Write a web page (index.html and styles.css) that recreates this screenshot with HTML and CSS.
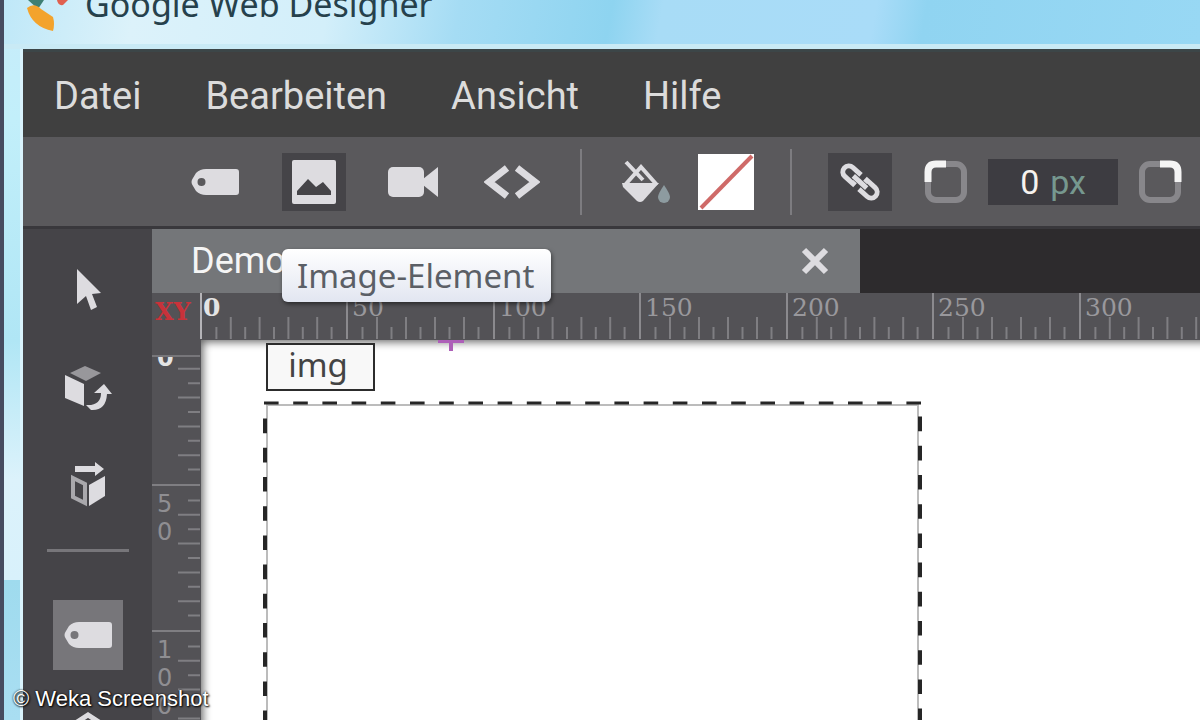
FILE: index.html
```
<!DOCTYPE html>
<html lang="de">
<head>
    <meta charset="UTF-8">
    <meta name="viewport" content="width=device-width, initial-scale=1.0">
    <title>Google Web Designer</title>
    <link rel="stylesheet" href="styles.css">
</head>
<body>
    <!-- shared shapes -->
    <svg class="defs" aria-hidden="true">
        <symbol id="tag" viewBox="0 0 48 28">
            <path fill-rule="evenodd" d="M15 1H45Q48 1 48 4V24Q48 27 45 27H15Q9 27 5 23L2 18Q-1 14 2 10L5 5Q9 1 15 1ZM10.500 10A4 4 0 1 0 10.500 18A4 4 0 1 0 10.500 10Z"/>
        </symbol>
        <symbol id="ticks-h" viewBox="0 0 100 46" preserveAspectRatio="none">
            <path vector-effect="non-scaling-stroke" d="M10 34V46M20 24V46M30 34V46M40 24V46M50 34V46M60 24V46M70 34V46M80 24V46M90 34V46"/>
        </symbol>
        <symbol id="ticks-v" viewBox="0 0 48 100" preserveAspectRatio="none">
            <path vector-effect="non-scaling-stroke" d="M36 10H48M26 20H48M36 30H48M26 40H48M36 50H48M26 60H48M36 70H48M26 80H48M36 90H48"/>
        </symbol>
    </svg>

    <div class="window">
        <header class="titlebar">
            <svg class="logo" viewBox="0 0 46 40">
                <path d="M4 0H20L14 9Z" fill="#3e7f73"/>
                <path d="M3 8Q10 2 17 9L29 17Q31 24 29 31Q8 27 3 8Z" fill="#f3a32c"/>
                <path d="M33 0H44L39 5Q34 6 33 0Z" fill="#e0604f"/>
            </svg>
            <span class="title">Google Web Designer</span>
        </header>

        <div class="app">
            <nav class="menu">
                <a href="#">Datei</a>
                <a href="#">Bearbeiten</a>
                <a href="#">Ansicht</a>
                <a href="#">Hilfe</a>
            </nav>

            <div class="toolbar">
                <div class="group elements">
                    <button aria-label="Tag-Element"><svg width="48" height="28"><use href="#tag"/></svg></button>
                    <button class="active" aria-label="Image-Element">
                        <svg width="46" height="46" viewBox="0 0 46 46">
                            <rect x="1" y="1" width="44" height="44" rx="2"/>
                            <path d="M6 36V32L17 20L25 28L32 23L40 32V36Z" fill="#454448"/>
                        </svg>
                        <span class="tooltip">Image-Element</span>
                    </button>
                    <button aria-label="Video-Element">
                        <svg width="52" height="34" viewBox="0 0 52 34">
                            <rect x="1" y="2" width="36" height="30" rx="5"/>
                            <path d="M36 14L51 2V32L36 20Z"/>
                        </svg>
                    </button>
                    <button aria-label="Code">
                        <svg width="56" height="34" viewBox="0 0 56 34">
                            <path class="line" d="M23 3L5 17L23 31M33 3L51 17L33 31" stroke-width="7"/>
                        </svg>
                    </button>
                </div>
                <span class="divider"></span>
                <div class="group fill">
                    <button aria-label="Füllen">
                        <svg width="50" height="44" viewBox="0 0 50 44">
                            <path class="line" d="M5 2L22 20M4 25L20 7L36 25" stroke-width="4"/>
                            <path d="M1 23H38L22 41Q19 43 16 41L2 27Z"/>
                            <path d="M43 25Q49 34 49 37A6 6 0 0 1 37 37Q37 34 43 25Z" fill="#8d9ba0"/>
                        </svg>
                    </button>
                    <button class="swatch" aria-label="Keine Farbe">
                        <svg width="56" height="56" viewBox="0 0 56 56">
                            <path d="M3 54L54 2" stroke="#cf6a68" stroke-width="4"/>
                        </svg>
                    </button>
                </div>
                <span class="divider"></span>
                <button class="active" aria-label="Ecken verknüpfen">
                    <svg width="42" height="40" viewBox="0 0 42 40">
                        <g class="line" stroke-width="5" transform="rotate(42 21 20)">
                            <path d="M17 14H6A6 6 0 0 0 6 26H17V23M25 17V14H36A6 6 0 0 1 36 26H25M12 20H30"/>
                        </g>
                    </svg>
                </button>
                <label class="radius">
                    <svg width="44" height="44" viewBox="0 0 44 44">
                        <rect class="corner" x="4" y="4" width="36" height="36" rx="8"/>
                        <path class="corner-on" d="M4 22V12Q4 4 12 4H22"/>
                    </svg>
                    <span class="field"><input type="text" value="0" aria-label="Radius">px</span>
                </label>
                <svg class="next-corner" width="44" height="44" viewBox="0 0 44 44">
                    <rect class="corner" x="4" y="4" width="36" height="36" rx="8"/>
                    <path class="corner-on" d="M22 4H32Q40 4 40 12V22"/>
                </svg>
            </div>

            <div class="main">
                <aside class="tools">
                    <button aria-label="Auswahl">
                        <svg width="26" height="44" viewBox="0 0 26 44">
                            <path d="M2 1L26 25L17 26L22 39L16 42L11 28L2 36Z"/>
                        </svg>
                    </button>
                    <button aria-label="3D-Objekt drehen">
                        <svg width="50" height="48" viewBox="0 0 50 48">
                            <path d="M7 9L22 2L38 9L23 17Z" fill="#98979b"/>
                            <path d="M2 11L21 20V42L2 34Z"/>
                            <path d="M23 41Q38 42 38 29H31L41 20L49 30H44Q43 47 28 46Z"/>
                        </svg>
                    </button>
                    <button aria-label="3D-Szene verschieben">
                        <svg width="38" height="48" viewBox="0 0 38 48">
                            <path d="M6 4H26V0L35 7L26 14V10H6Z"/>
                            <path d="M4 16L16 22V41L4 35Z" fill="none" stroke="#a9a8ac" stroke-width="4"/>
                            <path d="M20 23L36 14V34L20 44Z"/>
                        </svg>
                    </button>
                    <hr>
                    <button class="selected" aria-label="Tag"><svg width="48" height="28"><use href="#tag"/></svg></button>
                    <button aria-label="Stift">
                        <svg width="44" height="46" viewBox="0 0 44 46">
                            <path class="line" d="M5 16L22 5L39 16L33 40H11Z" stroke-width="5"/>
                            <circle cx="22" cy="20" r="5"/>
                        </svg>
                    </button>
                </aside>

                <section class="document">
                    <div class="tabs">
                        <div class="tab">
                            <span>Demo</span>
                            <button aria-label="Schließen">
                                <svg width="30" height="28" viewBox="0 0 30 28">
                                    <path class="line" d="M4 3L26 25M26 3L4 25" stroke-width="6"/>
                                </svg>
                            </button>
                        </div>
                    </div>

                    <div class="stage">
                        <div class="origin">XY</div>
                        <div class="ruler-h">
                            <div class="zero"><svg><use href="#ticks-h"/></svg><span>0</span></div>
                            <div><svg><use href="#ticks-h"/></svg><span>50</span></div>
                            <div><svg><use href="#ticks-h"/></svg><span>100</span></div>
                            <div><svg><use href="#ticks-h"/></svg><span>150</span></div>
                            <div><svg><use href="#ticks-h"/></svg><span>200</span></div>
                            <div><svg><use href="#ticks-h"/></svg><span>250</span></div>
                            <div><svg><use href="#ticks-h"/></svg><span>300</span></div>
                        </div>
                        <div class="ruler-v">
                            <div class="zero"><svg><use href="#ticks-v"/></svg><span>0</span></div>
                            <div><svg><use href="#ticks-v"/></svg><span>5<br>0</span></div>
                            <div><svg><use href="#ticks-v"/></svg><span>1<br>0<br>0</span></div>
                        </div>
                        <div class="canvas">
                            <svg class="anchor" width="26" height="12" viewBox="0 0 26 12">
                                <path d="M0 1H26M13 0V11" stroke="#ad5fb8" stroke-width="4"/>
                            </svg>
                            <div class="element-name">img</div>
                            <svg class="selection" width="660" height="660" viewBox="0 0 660 660">
                                <path d="M4 660V4H655V660" fill="none" stroke="#bcbcbc" stroke-width="2"/>
                                <g stroke="#262626" stroke-width="4" stroke-dasharray="1 1">
                                    <path d="M1 2H658" pathLength="45" stroke-width="3"/>
                                    <path d="M2 3V660" pathLength="45" stroke-dashoffset="1"/>
                                    <path d="M657 1V658" pathLength="45" stroke-dashoffset="1"/>
                                </g>
                            </svg>
                        </div>
                    </div>
                </section>
            </div>
        </div>
    </div>

    <div class="credit">© Weka Screenshot</div>
</body>
</html>
```
FILE: styles.css
```
* {
    box-sizing: border-box;
}
body {
    margin: 0;
    height: 100vh;
    overflow: hidden;
    position: relative;
    font-family: Roboto, "Liberation Sans", sans-serif;
}
button {
    padding: 0;
    border: none;
    background: none;
    display: flex;
    align-items: center;
    justify-content: center;
}
svg {
    display: block;
    fill: #dddce0;
}
.line {
    fill: none;
    stroke: #dddce0;
}
.defs {
    position: absolute;
    width: 0;
    height: 0;
}

/* window frame */
.window {
    height: 100%;
    display: flex;
    flex-direction: column;
    border-left: 4px solid #464c60;
    background: linear-gradient(#c8ecfa 0, #c2effa 120px, #b0e6f5 340px, #dcf2fb 480px, #d8f1fb 580px, #9fdbee 580px, #a9def2 100%);
}
.titlebar {
    flex: none;
    height: 49px;
    padding-left: 20px;
    display: flex;
    border-bottom: 5px solid #c9eaf5;
    background: linear-gradient(100deg, #bfe8f8 0, #dcf2fa 130px, #d3effa 320px, #a5dcf4 450px, #8ed4f0 600px, #a8dcf6 650px, #a9dcf8 860px, #90d4f1 910px, #98d8f4 100%);
}
.logo {
    width: 46px;
    height: 40px;
}
.title {
    margin: -20px 0 0 15px;
    font-family: "Noto Sans", sans-serif;
    font-size: 34px;
    line-height: 48px;
    color: #26414c;
    white-space: nowrap;
}
.app {
    flex: 1;
    min-height: 0;
    margin-left: 16px;
    border-left: 3px solid #d9f3fc;
    display: flex;
    flex-direction: column;
    background: #454448;
}

/* menu */
.menu {
    flex: none;
    height: 88px;
    padding: 3px 0 0 31px;
    display: flex;
    align-items: center;
    gap: 64px;
    border-top: 3px solid #3c4648;
    background: #404040;
}
.menu a {
    color: #dcdcdc;
    font-size: 38px;
    text-decoration: none;
}

/* toolbar */
.toolbar {
    flex: none;
    height: 92px;
    padding-left: 160px;
    display: flex;
    align-items: center;
    border-bottom: 3px solid #39383c;
    background: #5a595c;
}
.toolbar svg,
.toolbar button {
    flex: none;
}
.toolbar button {
    width: 64px;
    height: 58px;
}
.toolbar .active {
    position: relative;
    background: #454448;
}
.group {
    display: flex;
    align-items: center;
}
.elements {
    gap: 35px;
}
.fill {
    gap: 24px;
}
.toolbar .fill button {
    width: 56px;
}
.toolbar .swatch {
    height: 56px;
    background: #fff;
}
.divider {
    flex: none;
    width: 2px;
    height: 66px;
    margin: 0 36px;
    background: #7d7c80;
}
.radius {
    margin: 0 20px 0 32px;
    display: flex;
    align-items: center;
    gap: 20px;
}
.corner {
    fill: none;
    stroke: #88878b;
    stroke-width: 6;
}
.corner-on {
    fill: none;
    stroke: #f4f4f4;
    stroke-width: 7;
}
.field {
    width: 130px;
    height: 46px;
    display: flex;
    align-items: center;
    justify-content: center;
    gap: 10px;
    background: #3d3c41;
    color: #76988f;
    font-size: 34px;
}
.field input {
    width: 20px;
    padding: 0;
    border: none;
    background: none;
    color: #f6f2ee;
    font: inherit;
}
.tooltip {
    position: absolute;
    top: 96px;
    left: 0;
    z-index: 2;
    padding: 0 17px 0 15px;
    border-radius: 6px;
    background: linear-gradient(#fff, #e2e6f1);
    box-shadow: 1px 2px 4px rgba(0, 0, 0, 0.5);
    color: #5b5f66;
    font-family: "Noto Sans", sans-serif;
    font-size: 33px;
    line-height: 53px;
    white-space: nowrap;
}

/* left tools */
.main {
    flex: 1;
    min-height: 0;
    display: flex;
}
.tools {
    flex: none;
    width: 129px;
    padding-top: 26px;
    display: flex;
    flex-direction: column;
    align-items: center;
    gap: 28px;
    overflow: hidden;
}
.tools button {
    flex: none;
    width: 70px;
    height: 70px;
}
.tools .selected {
    background: #77767a;
}
.tools hr {
    flex: none;
    width: 82px;
    height: 3px;
    margin: 0 0 20px;
    border: none;
    background: #77767a;
}

/* document */
.document {
    flex: 1;
    min-width: 0;
    display: flex;
    flex-direction: column;
}
.tabs {
    flex: none;
    display: flex;
    background: #2d2b2d;
}
.tab {
    flex: 0 1 708px;
    height: 64px;
    padding: 0 30px 0 39px;
    display: flex;
    align-items: center;
    justify-content: space-between;
    background: #747679;
    color: #f5f5f5;
    font-size: 36px;
}
.stage {
    flex: 1;
    min-height: 0;
    display: grid;
    grid-template: 46px 18px 1fr / 48px 1fr;
    background: #535256;
}
.origin {
    grid-area: 1 / 1 / 3 / 2;
    padding: 4px 0 0 3px;
    border-bottom: 2px solid #77767a;
    color: #c8323a;
    font: bold 24px/30px "DejaVu Serif", serif;
}
.ruler-h {
    grid-area: 1 / 2 / 2 / 3;
    display: flex;
    overflow: hidden;
}
.ruler-h div,
.ruler-v div {
    flex: none;
    position: relative;
}
.ruler-h div {
    width: 146px;
    border-left: 2px solid #8b8a8e;
}
.ruler-h div:nth-child(even) {
    width: 147px;
}
.ruler-h svg,
.ruler-v svg {
    position: absolute;
    width: 100%;
    height: 100%;
    fill: none;
    stroke: #7f7e82;
    stroke-width: 2;
}
.ruler-h span {
    display: block;
    padding-left: 4px;
    color: #99989c;
    font: 25px/30px "DejaVu Serif", serif;
}
.ruler-h .zero {
    border-color: #b5b4b8;
}
.ruler-h .zero span {
    padding-left: 1px;
    color: #e4e4e4;
    font-weight: bold;
}
.ruler-v {
    grid-area: 3 / 1 / 4 / 2;
    overflow: hidden;
}
.ruler-v div {
    height: 146px;
    border-top: 2px solid #7f7e82;
}
.ruler-v .zero {
    margin-top: -19px;
}
.ruler-v span {
    display: block;
    padding: 4px 0 0 5px;
    color: #8f8e92;
    font: 24px/28px "DejaVu Sans", sans-serif;
}
.ruler-v .zero span {
    color: #e4e4e4;
    font-weight: bold;
}
.canvas {
    grid-area: 2 / 2 / 4 / 3;
    position: relative;
    overflow: hidden;
    margin: 1px 0 0 1px;
    background: #fff;
    box-shadow: inset 7px 7px 8px -5px rgba(0, 0, 0, 0.6);
}
.anchor {
    position: absolute;
    top: 0;
    left: 237px;
}
.element-name {
    position: absolute;
    top: 3px;
    left: 65px;
    width: 109px;
    padding: 0 5px 4px 0;
    border: 2px solid #2c2c2c;
    background: #f8f8f8;
    color: #444;
    font: 33px/40px "Noto Sans", sans-serif;
    text-align: center;
}
.selection {
    position: absolute;
    top: 61px;
    left: 62px;
}

.credit {
    position: absolute;
    left: 13px;
    bottom: 8px;
    color: #fff;
    font-family: "Liberation Sans", Arial, sans-serif;
    font-size: 22px;
    line-height: 26px;
    text-shadow: 1px 1px 2px #000, 0 0 2px #000;
}
```
